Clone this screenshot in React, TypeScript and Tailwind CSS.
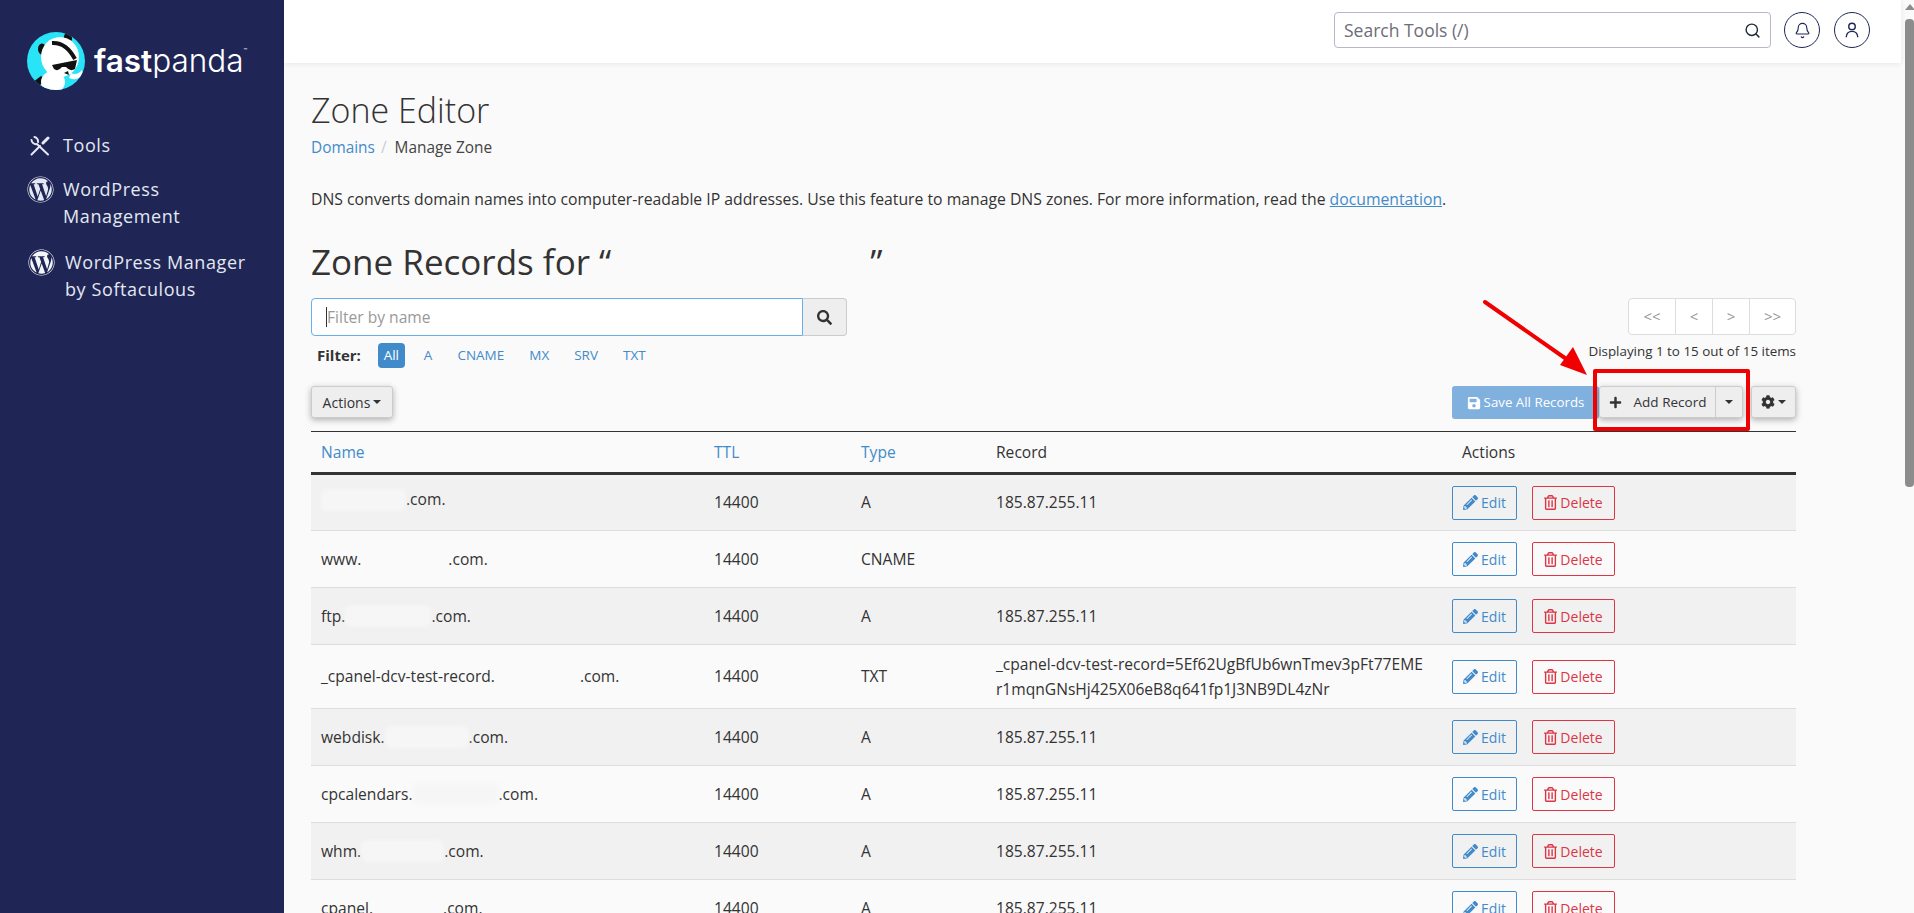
import { Bell, Search } from 'lucide-react';
import { FaCog, FaPencilAlt, FaPlus, FaRegTrashAlt, FaSave, FaSearch, FaWordpress } from 'react-icons/fa';

// Name cells have the domain blanked out, so each row keeps a gap of the right width
const rows = [
  { before: '', gap: 85, type: 'A', record: '185.87.255.11', smudge: true },
  { before: 'www.', gap: 87, type: 'CNAME', record: '' },
  { before: 'ftp.', gap: 86, type: 'A', record: '185.87.255.11', smudge: true },
  {
    before: '_cpanel-dcv-test-record.',
    gap: 85,
    type: 'TXT',
    record: '_cpanel-dcv-test-record=5Ef62UgBfUb6wnTmev3pFt77EME\nr1mqnGNsHj425X06eB8q641fp1J3NB9DL4zNr',
    tall: true,
  },
  { before: 'webdisk.', gap: 84, type: 'A', record: '185.87.255.11', smudge: true },
  { before: 'cpcalendars.', gap: 86, type: 'A', record: '185.87.255.11', smudge: true },
  { before: 'whm.', gap: 83, type: 'A', record: '185.87.255.11', smudge: true },
  { before: 'cpanel.', gap: 70, type: 'A', record: '185.87.255.11' },
];

function Caret() {
  return <span className="inline-block h-0 w-0 border-x-[4px] border-t-[4px] border-x-transparent border-t-current" />;
}

function PandaLogo() {
  return (
    <svg viewBox="0 0 58 58" className="h-[58px] w-[58px] shrink-0">
      <defs>
        <clipPath id="logo-clip">
          <circle cx="29" cy="29" r="29" />
        </clipPath>
      </defs>
      <g clipPath="url(#logo-clip)">
        <rect width="58" height="58" fill="#29e3f7" />
        <ellipse cx="41" cy="6" rx="4" ry="5" fill="#111" transform="rotate(-20 41 6)" />
        <ellipse cx="15" cy="17" rx="4" ry="5.5" fill="#111" />
        <path d="M14 44 L6 50 L10 55 L20 48 Z" fill="#111" />
        <path d="M44 41 Q50 44 55 38 L56 42 Q50 50 42 46 Z" fill="#fff" />
        <ellipse cx="33" cy="25" rx="19" ry="20" fill="#fff" />
        <ellipse cx="26" cy="50" rx="12" ry="11" fill="#fff" />
        <path d="M25 11 Q39 10 48 27" fill="none" stroke="#111" strokeWidth="4" />
        <path d="M25 33 L50 28 L48 37 Q43 40 39 35 L35 35 Q31 40 27 37 Z" fill="#111" />
        <path d="M37 41 L41 39 L42 43 Z" fill="#111" />
      </g>
    </svg>
  );
}

function ToolsIcon() {
  return (
    <svg viewBox="0 0 20 20" className="h-5 w-5 shrink-0" fill="none" stroke="#e8ebf3" strokeLinecap="round">
      <path d="M1.5 4 A4.5 4.5 0 0 0 7 8 L18 18.5" strokeWidth="2" />
      <path d="M4.5 1 A4.5 4.5 0 0 1 8 6" strokeWidth="2" />
      <path d="M1.5 18.5 L10 10" strokeWidth="2" />
      <path d="M13 7 L18 2" strokeWidth="3" />
    </svg>
  );
}

function Sidebar() {
  return (
    <aside className="w-[284px] shrink-0 bg-[#1f2656] pl-[27px] pt-[32px] text-[18px] leading-[27px] tracking-[0.6px] text-[#e4e8f1]">
      <div className="flex items-center">
        <PandaLogo />
        <div className="ml-[9px] flex items-start font-['Inter',sans-serif] text-[31.5px] leading-[40px] tracking-normal text-white">
          <span className="font-semibold">fast</span>
          <span className="font-light">panda</span>
          <span className="mt-[6px] text-[6px] leading-[8px]">™</span>
        </div>
      </div>
      <div className="mt-[42px] flex items-center gap-[13px] pl-[3px]">
        <ToolsIcon />
        <span>Tools</span>
      </div>
      <div className="mt-[17px] flex items-start gap-[9px]">
        <FaWordpress className="h-[27px] w-[27px] shrink-0 text-[#e4e8f1]" />
        <span>
          WordPress
          <br />
          Management
        </span>
      </div>
      <div className="ml-[1px] mt-[19px] flex items-start gap-[10px]">
        <FaWordpress className="h-[27px] w-[27px] shrink-0 text-[#f4f5f8]" />
        <span>
          WordPress Manager
          <br />
          by Softaculous
        </span>
      </div>
    </aside>
  );
}

function TopBar() {
  return (
    <header className="relative z-10 flex h-[63px] shrink-0 items-start justify-end bg-white pr-[31px] pt-[12px] shadow-[0_1px_6px_rgba(0,0,0,0.08)]">
      <div className="flex h-[36px] w-[437px] items-center rounded-[4px] border border-[#b9b6cc] pl-[9px] pr-[9px]">
        <span className="flex-1 text-[17.5px] text-[#6d6d78]">Search Tools (/)</span>
        <Search className="h-[17px] w-[17px] text-[#1f2933]" strokeWidth={2} />
      </div>
      <div className="ml-[13px] flex h-[36px] w-[36px] items-center justify-center rounded-full border border-[#1f2656] text-[#1f2656]">
        <Bell className="h-[17px] w-[17px]" strokeWidth={1.6} />
      </div>
      <div className="ml-[14px] flex h-[36px] w-[36px] items-center justify-center rounded-full border border-[#1f2656] text-[#1f2656]">
        <svg viewBox="0 0 20 20" className="h-[18px] w-[18px]" fill="none" stroke="currentColor" strokeWidth="1.6">
          <circle cx="10" cy="6" r="3.6" />
          <path d="M3.5 18 Q4 11.5 10 11.5 Q16 11.5 16.5 18" />
        </svg>
      </div>
    </header>
  );
}

function FilterBar() {
  return (
    <div className="mt-[12px] flex items-start justify-between">
      <div>
        <div className="flex h-[38px] w-[536px]">
          <div className="relative flex-1">
            <input
              readOnly
              placeholder="Filter by name"
              className="h-full w-full rounded-l-[4px] border border-[#66afe9] bg-white pl-[15px] text-[15.6px] outline-none placeholder:text-[#999]"
            />
            <span className="absolute left-[15px] top-[9px] h-[20px] w-px bg-[#333]" />
          </div>
          <div className="flex w-[44px] items-center justify-center rounded-r-[4px] border border-l-0 border-[#ccc] bg-[#eee] text-[#333]">
            <FaSearch className="h-[15px] w-[15px]" />
          </div>
        </div>
        <div className="mt-[7px] flex h-[25px] items-center text-[13.5px] text-[#428bca]">
          <span className="ml-[6px] mr-[17px] text-[15px] font-bold text-[#333]">Filter:</span>
          <span className="flex h-[25px] w-[27px] items-center justify-center rounded-[4px] bg-[#428bca] text-white">All</span>
          <span className="ml-[19px]">A</span>
          <span className="ml-[25px]">CNAME</span>
          <span className="ml-[25px]">MX</span>
          <span className="ml-[25px]">SRV</span>
          <span className="ml-[25px]">TXT</span>
        </div>
      </div>
      <div className="flex flex-col items-end">
        <div className="flex h-[37px] rounded-[4px] border border-[#ddd] bg-white text-[15px] text-[#999]">
          <span className="flex w-[46px] items-center justify-center">&lt;&lt;</span>
          <span className="flex w-[37px] items-center justify-center border-l border-[#ddd]">&lt;</span>
          <span className="flex w-[37px] items-center justify-center border-l border-[#ddd]">&gt;</span>
          <span className="flex w-[46px] items-center justify-center border-l border-[#ddd]">&gt;&gt;</span>
        </div>
        <div className="mt-[6px] text-[13.4px] leading-[20px] text-[#333]">Displaying 1 to 15 out of 15 items</div>
      </div>
    </div>
  );
}

function Toolbar() {
  return (
    <div className="mt-[18px] flex items-start justify-between">
      <button className="flex h-[32px] w-[82px] items-center justify-center gap-[3px] rounded-[3px] border border-[#ccc] bg-[#eee] text-[14px] text-[#333] shadow-[0_2px_6px_rgba(0,0,0,0.3)]">
        Actions <Caret />
      </button>
      <div className="flex items-start">
        <button className="flex h-[33px] w-[147px] items-center justify-center gap-[3px] rounded-[3px] bg-[#7fb0de] text-[13.3px] font-medium text-white">
          <FaSave className="h-[14px] w-[14px]" />
          Save All Records
        </button>
        <div className="flex h-[32px] w-[144px] rounded-[3px] border border-[#ccc] bg-[#eee] text-[13.5px] text-[#333] shadow-[0_2px_6px_rgba(0,0,0,0.3)]">
          <span className="flex w-[115px] items-center justify-center gap-[12px]">
            <FaPlus className="h-[13px] w-[13px]" />
            Add Record
          </span>
          <span className="flex flex-1 items-center justify-center border-l border-[#ccc]">
            <Caret />
          </span>
        </div>
        <button className="ml-[8px] flex h-[32px] w-[45px] items-center justify-center gap-[3px] rounded-[3px] border border-[#ccc] bg-[#eee] text-[#333] shadow-[0_2px_6px_rgba(0,0,0,0.3)]">
          <FaCog className="h-[14px] w-[14px]" />
          <Caret />
        </button>
      </div>
    </div>
  );
}

function RecordsTable() {
  return (
    <table className="mt-[12px] w-full table-fixed border-t border-[#333] text-[15.6px] leading-[25px] text-[#333]">
      <colgroup>
        <col className="w-[393px]" />
        <col className="w-[147px]" />
        <col className="w-[135px]" />
        <col className="w-[466px]" />
        <col />
      </colgroup>
      <thead>
        <tr className="h-[42px] border-b-[3px] border-[#333] text-left">
          <th className="px-[10px] font-normal text-[#428bca]">Name</th>
          <th className="px-[10px] font-normal text-[#428bca]">TTL</th>
          <th className="px-[10px] font-normal text-[#428bca]">Type</th>
          <th className="px-[10px] font-normal">Record</th>
          <th className="px-[10px] font-normal">Actions</th>
        </tr>
      </thead>
      <tbody>
        {rows.map((row, i) => (
          <tr key={i} className={`border-b border-[#ddd] ${row.tall ? 'h-[64px]' : 'h-[57px]'} ${i % 2 === 0 ? 'bg-[#f1f1f1]' : ''}`}>
            <td className="px-[10px]">
              <span className="inline-flex items-center">
                {row.before}
                <span
                  className={`inline-block h-[22px] rounded-[6px] ${row.smudge ? 'bg-[#f6f6f6] blur-[2px]' : ''}`}
                  style={{ width: row.gap }}
                />
                .com.
              </span>
            </td>
            <td className="px-[10px]">14400</td>
            <td className="px-[10px]">{row.type}</td>
            <td className="whitespace-pre-line px-[10px]">{row.record}</td>
            <td className="px-0">
              <div className="flex gap-[15px]">
                <button className="flex h-[34px] w-[65px] items-center justify-center gap-[3px] rounded-[2px] border border-[#428bca] text-[14px] text-[#428bca]">
                  <FaPencilAlt className="h-[15px] w-[15px]" />
                  Edit
                </button>
                <button className="flex h-[34px] w-[83px] items-center justify-center gap-[3px] rounded-[2px] border border-[#dc3545] text-[14px] text-[#dc3545]">
                  <FaRegTrashAlt className="h-[15px] w-[13px]" />
                  Delete
                </button>
              </div>
            </td>
          </tr>
        ))}
      </tbody>
    </table>
  );
}

export default function App() {
  return (
    <div className="relative flex h-screen overflow-hidden bg-[#fafafa] font-['Open_Sans',sans-serif] text-[#333]">
      <Sidebar />

      <div className="flex min-w-0 flex-1 flex-col">
        <TopBar />
        <main className="min-h-0 flex-1 overflow-hidden pl-[27px] pr-[105px]">
          <h1 className="mt-[23px] text-[34px] font-light leading-[48px]">Zone Editor</h1>
          <div className="mt-[2px] flex h-[24px] items-center text-[15.4px]">
            <span className="text-[#428bca]">Domains</span>
            <span className="mx-[6px] text-[#ccc]">/</span>
            <span className="ml-[2px] text-[#444]">Manage Zone</span>
          </div>
          <p className="mt-[27px] text-[15.75px] leading-[24px]">
            DNS converts domain names into computer-readable IP addresses. Use this feature to manage DNS zones. For more
            information, read the <span className="text-[#428bca] underline">documentation</span>.
          </p>
          <h2 className="mt-[27px] text-[35px] leading-[48px]">
            Zone Records for “<span className="inline-block w-[259px]" />”
          </h2>
          <FilterBar />
          <Toolbar />
          <RecordsTable />
        </main>
      </div>

      {/* scrollbar */}
      <div className="relative w-[13px] shrink-0 bg-[#fafafa] pl-[4px]">
        <div className="mx-auto mt-[4px] h-0 w-0 border-x-[5px] border-b-[6px] border-x-transparent border-b-[#8c8c8c]" />
        <div className="mt-[9px] h-[468px] rounded-[4px] bg-[#8c8c8c]" />
      </div>

      {/* annotation drawn over the screenshot */}
      <div className="pointer-events-none absolute left-[1593px] top-[369px] h-[62px] w-[157px] rounded-[2px] border-[4px] border-[#f00000]" />
      <svg className="pointer-events-none absolute left-[1480px] top-[296px] h-[85px] w-[115px]" viewBox="0 0 115 85">
        <path d="M5 6 L92 67" stroke="#f00000" strokeWidth="4" strokeLinecap="round" />
        <path d="M107 79 L80 69 L93 51 Z" fill="#f00000" />
      </svg>
    </div>
  );
}
